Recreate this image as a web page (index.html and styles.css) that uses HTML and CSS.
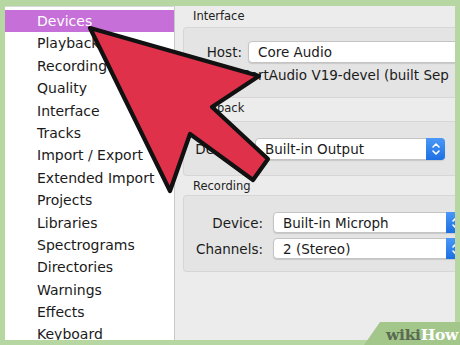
FILE: index.html
```html
<!DOCTYPE html>
<html>
<head>
<meta charset="utf-8">
<link rel="stylesheet" href="styles.css">
</head>
<body>
<div class="frame">
  <ul class="sidebar">
    <li class="active">Devices</li>
    <li>Playback</li>
    <li>Recording</li>
    <li>Quality</li>
    <li>Interface</li>
    <li>Tracks</li>
    <li>Import / Export</li>
    <li>Extended Import</li>
    <li>Projects</li>
    <li>Libraries</li>
    <li>Spectrograms</li>
    <li>Directories</li>
    <li>Warnings</li>
    <li>Effects</li>
    <li>Keyboard</li>
  </ul>
  <div class="main">
    <div class="section-label">Interface</div>
    <div class="group g-interface">
      <div class="row">
        <span class="label host-label">Host:</span>
        <div class="select host-select"><span>Core Audio</span></div>
      </div>
      <div class="info">PortAudio V19-devel (built Sep</div>
    </div>
    <div class="section-label">Playback</div>
    <div class="group g-playback">
      <div class="row">
        <span class="label play-label">Device:</span>
        <div class="select play-select"><span>Built-in Output</span>
          <span class="stepper"><svg width="10" height="14" viewBox="0 0 10 14"><path d="M2 5 L5 2 L8 5 M2 9 L5 12 L8 9" fill="none" stroke="#fff" stroke-width="1.6" stroke-linecap="round" stroke-linejoin="round"/></svg></span>
        </div>
      </div>
    </div>
    <div class="section-label rec">Recording</div>
    <div class="group g-recording">
      <div class="row">
        <span class="label rec-label">Device:</span>
        <div class="select rec-select"><span>Built-in Microph</span>
          <span class="stepper"><svg width="10" height="14" viewBox="0 0 10 14"><path d="M2 5 L5 2 L8 5 M2 9 L5 12 L8 9" fill="none" stroke="#fff" stroke-width="1.6" stroke-linecap="round" stroke-linejoin="round"/></svg></span>
        </div>
      </div>
      <div class="row">
        <span class="label rec-label">Channels:</span>
        <div class="select rec-select"><span>2 (Stereo)</span>
          <span class="stepper"><svg width="10" height="14" viewBox="0 0 10 14"><path d="M2 5 L5 2 L8 5 M2 9 L5 12 L8 9" fill="none" stroke="#fff" stroke-width="1.6" stroke-linecap="round" stroke-linejoin="round"/></svg></span>
        </div>
      </div>
    </div>
  </div>
</div>
<svg class="arrow" width="460" height="345" viewBox="0 0 460 345">
  <path d="M90 28 L259 76 L212 107 L268 159 L253 180 L190 134 L170 191 Z" fill="#e0314b" stroke="#111" stroke-width="4.2" stroke-linejoin="round"/>
</svg>
<div class="wikihow"><span class="wiki">wiki</span><span class="how">How</span></div>
</body>
</html>
```
FILE: styles.css
```css
* { box-sizing: border-box; }
html, body { margin: 0; padding: 0; }
body {
  width: 460px;
  height: 345px;
  overflow: hidden;
  background: #b6d6a2;
  font-family: "DejaVu Sans", "Liberation Sans", sans-serif;
  position: relative;
}
.frame {
  width: 460px;
  height: 345px;
  padding: 6px 5px 5px 5px;
  display: flex;
}
.sidebar {
  list-style: none;
  margin: 0;
  padding: 3px 0 0 0;
  width: 170px;
  background: #fff;
  border-top: 1px solid #d9d9d9;
  border-right: 1px solid #c9c9c9;
  overflow: hidden;
  color: #1a1a1a;
  font-size: 14px;
}
.sidebar li {
  height: 22.4px;
  line-height: 22px;
  padding-left: 32px;
  white-space: nowrap;
}
.sidebar li.active {
  background: #c76fd9;
  color: #fff;
}
.main {
  flex: 1;
  background: #ececec;
  overflow: hidden;
  padding-left: 8px;
  display: flex;
  flex-direction: column;
  font-size: 13.5px;
  color: #1b1b1b;
}
.section-label {
  font-size: 11.5px;
  padding-left: 10px;
  height: 21px;
  line-height: 21px;
  color: #222;
  flex: none;
}
.group {
  background: #e4e4e4;
  border: 1px solid #d6d6d6;
  border-right: none;
  border-radius: 4px 0 0 4px;
  width: 290px;
  flex: none;
  display: flex;
  flex-direction: column;
}
.g-interface { height: 71px; padding-top: 13px; }
.g-playback { height: 55px; padding-top: 16px; margin-top: 2px; }
.section-label.rec { height: 19px; line-height: 21px; }
.g-recording { height: 77px; padding-top: 16px; gap: 5px; }
.row {
  display: flex;
  align-items: center;
}
.label {
  text-align: right;
  white-space: nowrap;
  flex: none;
}
.host-label { width: 58px; margin-right: 6px; }
.play-label { width: 62px; margin-right: 9px; }
.rec-label { width: 79px; margin-right: 10px; }
.select {
  position: relative;
  height: 22px;
  background: #fff;
  border: 1px solid #c4c4c4;
  border-radius: 4px;
  box-shadow: 0 1px 1px rgba(0,0,0,0.12);
  display: flex;
  align-items: center;
  padding-left: 9px;
  white-space: nowrap;
  flex: none;
}
.host-select { width: 240px; }
.play-select { width: 190px; }
.rec-select { width: 200px; height: 21px; }
.stepper {
  position: absolute;
  top: -1px;
  bottom: -1px;
  width: 19px;
  background: linear-gradient(#4a98f7, #1d6fe3);
  border-radius: 0 4px 4px 0;
  display: flex;
  align-items: center;
  justify-content: center;
}
.play-select .stepper { right: -1px; }
.rec-select .stepper { left: 172px; }
.info {
  margin-top: 4px;
  padding-left: 58px;
  white-space: nowrap;
}
.arrow {
  position: absolute;
  left: 0;
  top: 0;
}
.wikihow {
  position: absolute;
  right: 0;
  bottom: 0;
  width: 96px;
  height: 23px;
  background: #a3c78b;
  clip-path: polygon(16px 0, 100% 0, 100% 100%, 0 100%);
  font-family: "DejaVu Serif", "Liberation Serif", serif;
  font-weight: bold;
  font-size: 15.5px;
  line-height: 25px;
  padding-left: 22px;
  letter-spacing: -0.3px;
}
.wiki { color: #5a6a52; }
.how { color: #fff; }
```
